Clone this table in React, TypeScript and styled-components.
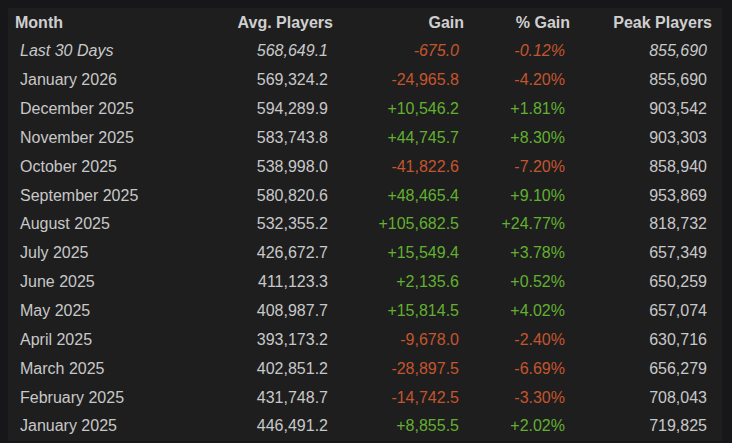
import React from "react";
import styled, { createGlobalStyle } from "styled-components";

const Global = createGlobalStyle`
  html, body { margin: 0; padding: 0; background: #171719; }
  body { font-family: "Liberation Sans", Arial, sans-serif; }
`;

const Page = styled.div`
  padding: 8px 10px 0 8px;
  height: 443px;
  box-sizing: border-box;
  overflow: hidden;
`;

const Table = styled.div`
  background: #1e1e1f;
  display: grid;
  grid-template-columns: 192px 143px 131px 106px 142px;
`;

const Row = styled.div<{ $head?: boolean }>`
  display: contents;
`;

const Cell = styled.div<{ $head?: boolean; $align?: "left" | "right"; $tone?: "up" | "down" | "plain"; $italic?: boolean }>`
  height: ${(p) => (p.$head ? "29px" : "28.85px")};
  display: flex;
  align-items: center;
  justify-content: ${(p) => (p.$align === "left" ? "flex-start" : "flex-end")};
  padding: ${(p) => (p.$head ? "0 10px 0 7px" : "0 15px 0 12px")};
  font-size: 16px;
  font-weight: ${(p) => (p.$head ? 700 : 400)};
  font-style: ${(p) => (p.$italic ? "italic" : "normal")};
  color: ${(p) =>
    p.$head ? "#cfcfcf" : p.$tone === "up" ? "#62b02f" : p.$tone === "down" ? "#c4552d" : "#c8c8c8"};
  white-space: nowrap;
`;

type R = [string, string, string, string, string];

const rows: R[] = [
  ["Last 30 Days", "568,649.1", "-675.0", "-0.12%", "855,690"],
  ["January 2026", "569,324.2", "-24,965.8", "-4.20%", "855,690"],
  ["December 2025", "594,289.9", "+10,546.2", "+1.81%", "903,542"],
  ["November 2025", "583,743.8", "+44,745.7", "+8.30%", "903,303"],
  ["October 2025", "538,998.0", "-41,822.6", "-7.20%", "858,940"],
  ["September 2025", "580,820.6", "+48,465.4", "+9.10%", "953,869"],
  ["August 2025", "532,355.2", "+105,682.5", "+24.77%", "818,732"],
  ["July 2025", "426,672.7", "+15,549.4", "+3.78%", "657,349"],
  ["June 2025", "411,123.3", "+2,135.6", "+0.52%", "650,259"],
  ["May 2025", "408,987.7", "+15,814.5", "+4.02%", "657,074"],
  ["April 2025", "393,173.2", "-9,678.0", "-2.40%", "630,716"],
  ["March 2025", "402,851.2", "-28,897.5", "-6.69%", "656,279"],
  ["February 2025", "431,748.7", "-14,742.5", "-3.30%", "708,043"],
  ["January 2025", "446,491.2", "+8,855.5", "+2.02%", "719,825"],
];

const tone = (v: string) => (v.startsWith("+") ? "up" : v.startsWith("-") ? "down" : "plain");

export default function App() {
  return (
    <Page>
      <Global />
      <Table>
        <Row $head>
          <Cell $head $align="left">Month</Cell>
          <Cell $head>Avg. Players</Cell>
          <Cell $head>Gain</Cell>
          <Cell $head>% Gain</Cell>
          <Cell $head>Peak Players</Cell>
        </Row>
        {rows.map((r, i) => {
          const it = i === 0;
          return (
            <Row key={r[0]}>
              <Cell $align="left" $italic={it}>{r[0]}</Cell>
              <Cell $italic={it}>{r[1]}</Cell>
              <Cell $italic={it} $tone={tone(r[2])}>{r[2]}</Cell>
              <Cell $italic={it} $tone={tone(r[3])}>{r[3]}</Cell>
              <Cell $italic={it}>{r[4]}</Cell>
            </Row>
          );
        })}
      </Table>
    </Page>
  );
}
